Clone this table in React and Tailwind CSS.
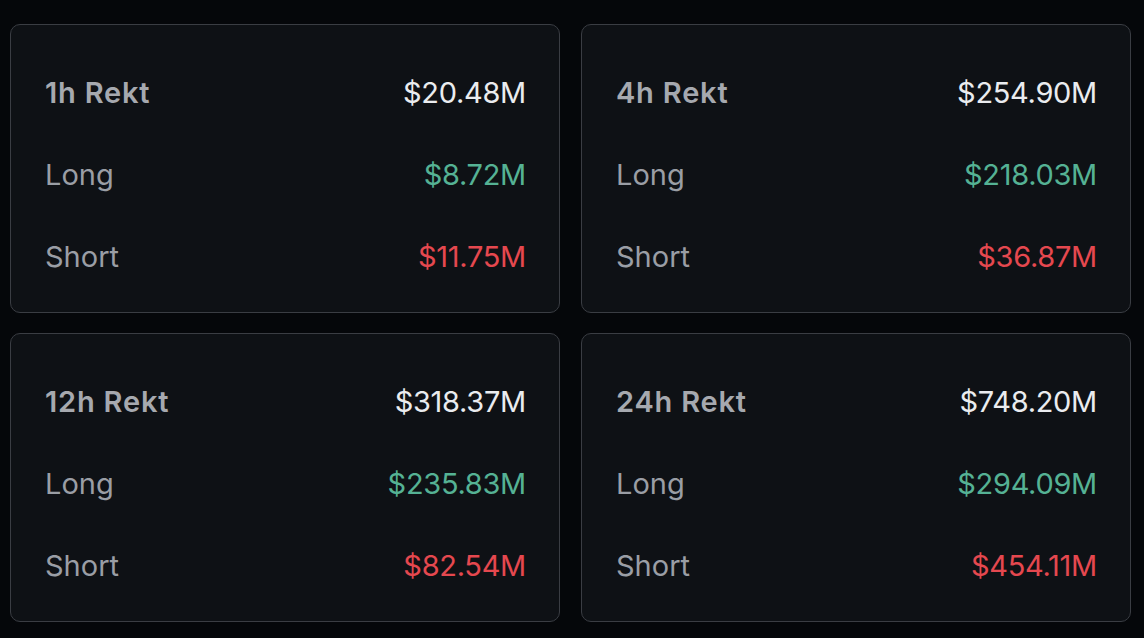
const cards = [
  { label: '1h Rekt', total: '$20.48M', long: '$8.72M', short: '$11.75M' },
  { label: '4h Rekt', total: '$254.90M', long: '$218.03M', short: '$36.87M' },
  { label: '12h Rekt', total: '$318.37M', long: '$235.83M', short: '$82.54M' },
  { label: '24h Rekt', total: '$748.20M', long: '$294.09M', short: '$454.11M' },
];

function RektCard({ label, total, long, short }) {
  return (
    <div className="h-[289px] rounded-[10px] border-[1.5px] border-[#3a3d43] bg-[#0e1115] pl-[34px] pr-[33px] pt-[48px] flex flex-col gap-[42px]">
      <div className="flex items-center justify-between h-[40px]">
        <span className="text-[29px] font-semibold tracking-[0.8px] text-[#a6a9af]">{label}</span>
        <span className="text-[29px] tracking-[-0.3px] text-[#eaecef]">{total}</span>
      </div>
      <div className="flex items-center justify-between h-[40px]">
        <span className="text-[29px] text-[#9a9ea5]">Long</span>
        <span className="text-[29px] tracking-[-0.3px] text-[#55b294]">{long}</span>
      </div>
      <div className="flex items-center justify-between h-[40px]">
        <span className="text-[29px] text-[#9a9ea5]">Short</span>
        <span className="text-[29px] tracking-[-0.3px] text-[#e5484f]">{short}</span>
      </div>
    </div>
  );
}

export default function App() {
  return (
    <div className="w-[1144px] h-[638px] bg-[#05070a] pt-[24px] pl-[10px] pr-[13px] font-['Inter',sans-serif]">
      <div className="grid grid-cols-2 gap-x-[21px] gap-y-[20px]">
        {cards.map((c) => (
          <RektCard key={c.label} {...c} />
        ))}
      </div>
    </div>
  );
}
